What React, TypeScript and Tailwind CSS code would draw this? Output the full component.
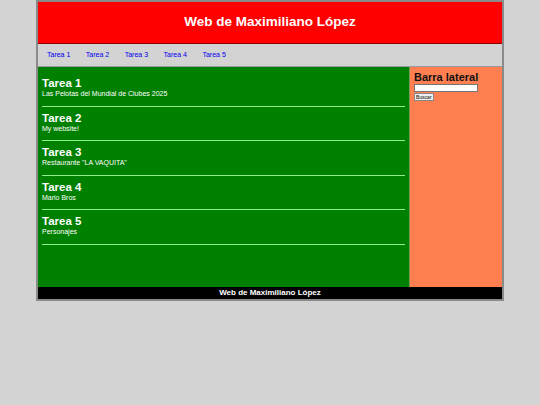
const tareas = [
  { titulo: "Tarea 1", desc: "Las Pelotas del Mundial de Clubes 2025" },
  { titulo: "Tarea 2", desc: "My website!" },
  { titulo: "Tarea 3", desc: 'Restaurante "LA VAQUITA"' },
  { titulo: "Tarea 4", desc: "Mario Bros" },
  { titulo: "Tarea 5", desc: "Personajes" },
];

export default function App() {
  return (
    <div className="min-h-[405px] bg-[#d3d3d3]" style={{ fontFamily: "'Liberation Sans', Arial, sans-serif" }}>
      <div className="mx-auto w-[468px] border-2 border-[#8a8a8a]">
        {/* Header */}
        <header className="flex h-[42px] items-center justify-center border-b border-[#8b0000] bg-[#ff0000]">
          <h1 className="text-[13.5px] font-bold text-white">Web de Maximiliano López</h1>
        </header>

        {/* Nav */}
        <nav className="flex h-[23px] items-center gap-[15.5px] border-b border-[#9a9a9a] bg-[#d3d3d3] px-[9px]">
          {tareas.map((t) => (
            <a key={t.titulo} className="text-[7px] text-[#0000ee]">
              {t.titulo}
            </a>
          ))}
        </nav>

        {/* Main + sidebar */}
        <div className="flex h-[220px]">
          <main className="flex-1 bg-[#008000] px-[4px] pt-[10px]">
            {tareas.map((t) => (
              <div key={t.titulo} className="mb-[5px] border-b border-[#90ee90] pb-[7.5px]">
                <h2 className="text-[11.5px] font-bold leading-[12px] text-white">{t.titulo}</h2>
                <p className="text-[7px] leading-[9px] text-white">{t.desc}</p>
              </div>
            ))}
          </main>
          <aside className="w-[93px] border-l border-[#7a9a5a] bg-[#ff7f50] px-[4px] pt-[4px]">
            <h3 className="text-[11px] font-bold leading-[13px] text-[#111]">Barra lateral</h3>
            <input className="block h-[8px] w-[64px] border border-[#767676] bg-white" />
            <button className="mt-[1px] block border border-[#888] bg-[#efefef] px-[1px] text-[5px] leading-[6px]">Buscar</button>
          </aside>
        </div>

        {/* Footer */}
        <footer className="flex h-[12px] items-center justify-center bg-black">
          <span className="text-[8px] font-bold text-white">Web de Maximiliano López</span>
        </footer>
      </div>
    </div>
  );
}
